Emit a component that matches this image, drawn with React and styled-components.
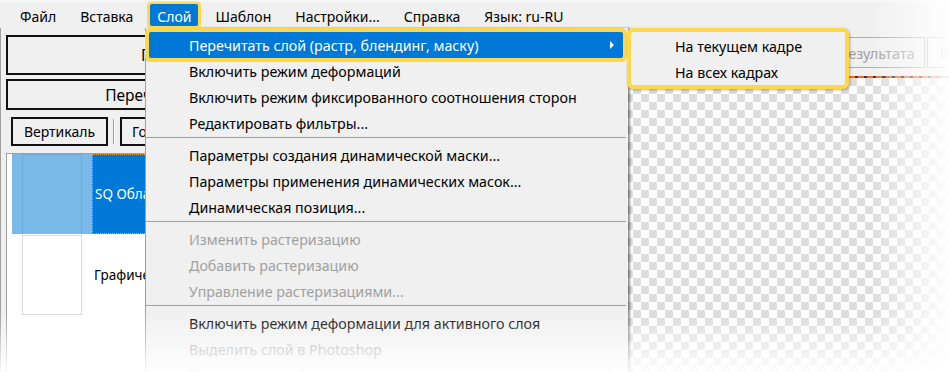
import React from "react";
import styled, { createGlobalStyle } from "styled-components";

const GlobalStyle = createGlobalStyle`
  html, body {
    margin: 0;
    padding: 0;
    background: #fff;
  }
  body {
    font-family: "Noto Sans", "DejaVu Sans", sans-serif;
    overflow: hidden;
  }
`;

const Screen = styled.div`
  position: relative;
  width: 949px;
  height: 372px;
  overflow: hidden;
  background: #f0f0f0;
  color: #000;
  font-size: 14.25px;
`;

const MenuBar = styled.div`
  display: flex;
  align-items: flex-start;
  height: 28px;
  padding-left: 13px;
  gap: 10px;
  font-size: 14px;
`;

const MenuTitle = styled.div`
  display: flex;
  align-items: center;
  box-sizing: border-box;
  height: 22px;
  margin-top: 4px;
  padding: 2px 7px 0;
  border-radius: 2px;
  white-space: nowrap;
  background: ${(p) => (p.$active ? "#0078d7" : "transparent")};
  color: ${(p) => (p.$active ? "#fff" : "#000")};
  box-shadow: ${(p) => (p.$active ? "0 0 0 3px #ffd84a" : "none")};
  position: relative;
  z-index: 3;
`;

const Workspace = styled.div`
  display: flex;
  height: 344px;
`;

const LeftPanel = styled.div`
  flex: none;
  width: 419px;
  display: flex;
  flex-direction: column;
  border-left: 1px solid #a0a0a0;
  padding: 7px 0 0 5px;
  gap: 4px;
`;

const WideButton = styled.div`
  box-sizing: border-box;
  height: ${(p) => p.$h}px;
  margin-right: 10px;
  display: flex;
  align-items: center;
  justify-content: center;
  border: 2px solid #111;
  background: #f0f0f0;
  font-size: 15.5px;
  white-space: nowrap;
`;

const ButtonRow = styled.div`
  display: flex;
  align-items: stretch;
  gap: 5px;
  height: 29px;
  padding-left: 5px;
  margin-top: 3px;
`;

const SmallButton = styled.div`
  box-sizing: border-box;
  width: ${(p) => p.$w}px;
  display: flex;
  align-items: center;
  justify-content: center;
  border: 2px solid #111;
  background: #f0f0f0;
  font-size: 14px;
  white-space: nowrap;
`;

const VSep = styled.div`
  width: 1px;
  background: #a0a0a0;
  border-right: 1px solid #fff;
  margin: 2px 0;
`;

const LayerList = styled.div`
  flex: 1;
  margin-top: 3px;
  margin-right: 10px;
  border-left: 1px solid #a0a0a0;
  border-top: 1px solid #a0a0a0;
  background: #fff;
  padding-left: 5px;
`;

const LayerRow = styled.div`
  display: grid;
  grid-template-columns: 80px 1fr;
  height: 80px;
  margin-bottom: 1px;
`;

const ThumbCell = styled.div`
  display: flex;
  justify-content: center;
  background: ${(p) => (p.$selected ? "#7ab8e8" : "#fff")};
`;

const Thumb = styled.div`
  width: 60px;
  box-sizing: border-box;
  border: 1px solid ${(p) => (p.$selected ? "#6aaade" : "#d9d9d9")};
  border-bottom: ${(p) => (p.$selected ? "none" : "1px solid #d9d9d9")};
`;

const NameCell = styled.div`
  display: flex;
  align-items: center;
  padding-left: 2px;
  font-size: 13.5px;
  white-space: nowrap;
  box-sizing: border-box;
  background: ${(p) => (p.$selected ? "#0078d7" : "#fff")};
  color: ${(p) => (p.$selected ? "#fff" : "#000")};
  border: ${(p) => (p.$selected ? "1px dotted #e8a050" : "none")};
`;

const RightPanel = styled.div`
  flex: 1;
  min-width: 0;
  display: flex;
  flex-direction: column;
`;

const Toolbar = styled.div`
  display: flex;
  gap: 2px;
  height: 31px;
  padding: 9px 0 0 178px;
`;

const ToolButton = styled.div`
  box-sizing: border-box;
  flex: none;
  width: ${(p) => p.$w}px;
  display: flex;
  align-items: center;
  justify-content: center;
  border: 1px solid #adadad;
  background: #f0f0f0;
  color: #a0a0a0;
  font-size: 14.5px;
  white-space: nowrap;
`;

const Canvas = styled.div`
  flex: 1;
  margin-top: 8px;
  border-top: 2px solid transparent;
  border-image: repeating-linear-gradient(90deg, #f26b2a 0 6px, #333 6px 9px) 2;
  background-color: #fff;
  background-image: repeating-conic-gradient(#dcdcdc 0 25%, #fff 0 50%);
  background-size: 16px 16px;
`;

const Dropdown = styled.div`
  position: absolute;
  z-index: 2;
  left: 145px;
  top: 28px;
  width: 483px;
  height: 360px;
  box-sizing: border-box;
  padding-top: 4px;
  background: #f0f0f0;
  border-left: 1px solid #a0a0a0;
  box-shadow: 2px 0 2px rgba(0, 0, 0, 0.45);
`;

const MenuItem = styled.div`
  position: relative;
  height: 26px;
  margin: 0 5px 0 3px;
  padding-left: 40px;
  display: flex;
  align-items: center;
  white-space: nowrap;
  border-radius: ${(p) => (p.$active ? "2px" : "0")};
  background: ${(p) => (p.$active ? "#0078d7" : "transparent")};
  color: ${(p) => (p.$active ? "#fff" : p.$disabled ? "#a0a0a0" : "#000")};
  box-shadow: ${(p) => (p.$active ? "0 0 0 4px #ffd84a" : "none")};
`;

const Arrow = styled.span`
  position: absolute;
  right: 9px;
  top: 50%;
  margin-top: -4px;
  width: 0;
  height: 0;
  border-top: 4px solid transparent;
  border-bottom: 4px solid transparent;
  border-left: 4px solid ${(p) => (p.$disabled ? "#a0a0a0" : "#fff")};
`;

const Separator = styled.div`
  height: 1px;
  margin: 1px 2px 4px 0;
  background: #a0a0a0;
`;

const Submenu = styled.div`
  position: absolute;
  z-index: 4;
  left: 627px;
  top: 28px;
  width: 222px;
  height: 61px;
  box-sizing: border-box;
  padding-top: 1px;
  border: 4px solid #ffd84a;
  border-radius: 6px;
  background: #f0f0f0;
  box-shadow: 1px 1px 3px rgba(0, 0, 0, 0.3);
`;

const SubItem = styled.div`
  height: 26px;
  padding-left: 44px;
  display: flex;
  align-items: center;
  white-space: nowrap;
`;

const Fade = styled.div`
  position: absolute;
  inset: 0;
  z-index: 10;
  pointer-events: none;
  background:
    linear-gradient(to right, rgba(255, 255, 255, 0) 870px, rgba(255, 255, 255, 0.95) 949px),
    linear-gradient(to bottom, rgba(255, 255, 255, 0) 312px, rgba(255, 255, 255, 0.92) 372px),
    linear-gradient(to bottom, rgba(248, 252, 252, 0.8) 0, rgba(255, 255, 255, 0) 3px);
`;

const titles = ["Файл", "Вставка", "Слой", "Шаблон", "Настройки...", "Справка", "Язык: ru-RU"];

const menu = [
  [
    { label: "Перечитать слой (растр, блендинг, маску)", active: true, sub: true },
    { label: "Включить режим деформаций" },
    { label: "Включить режим фиксированного соотношения сторон" },
    { label: "Редактировать фильтры..." },
  ],
  [
    { label: "Параметры создания динамической маски..." },
    { label: "Параметры применения динамических масок..." },
    { label: "Динамическая позиция..." },
  ],
  [
    { label: "Изменить растеризацию", disabled: true },
    { label: "Добавить растеризацию", disabled: true },
    { label: "Управление растеризациями...", disabled: true },
  ],
  [
    { label: "Включить режим деформации для активного слоя" },
    { label: "Выделить слой в Photoshop", disabled: true },
    { label: "Изменить тип области отношения на", disabled: true, sub: true },
  ],
];

export default function App() {
  return (
    <Screen>
      <GlobalStyle />
      <MenuBar>
        {titles.map((t) => (
          <MenuTitle key={t} $active={t === "Слой"}>
            {t}
          </MenuTitle>
        ))}
      </MenuBar>

      <Workspace>
        <LeftPanel>
          <WideButton $h={40}>Просчитать кадры</WideButton>
          <WideButton $h={31}>Перечитать все слои из PSD</WideButton>
          <ButtonRow>
            <SmallButton $w={97}>Вертикаль</SmallButton>
            <VSep />
            <SmallButton $w={110}>Горизонталь</SmallButton>
          </ButtonRow>
          <LayerList>
            <LayerRow>
              <ThumbCell $selected>
                <Thumb $selected />
              </ThumbCell>
              <NameCell $selected>SQ Облако</NameCell>
            </LayerRow>
            <LayerRow>
              <ThumbCell>
                <Thumb />
              </ThumbCell>
              <NameCell>Графический слой</NameCell>
            </LayerRow>
          </LayerList>
        </LeftPanel>

        <RightPanel>
          <Toolbar>
            <ToolButton $w={150}>Обновить</ToolButton>
            <ToolButton $w={170}>Просмотр результата</ToolButton>
            <ToolButton $w={130}>Предпросмотр</ToolButton>
          </Toolbar>
          <Canvas />
        </RightPanel>
      </Workspace>

      <Dropdown>
        {menu.map((group, gi) => (
          <React.Fragment key={gi}>
            {gi > 0 && <Separator />}
            {group.map((item) => (
              <MenuItem key={item.label} $active={item.active} $disabled={item.disabled}>
                {item.label}
                {item.sub && <Arrow $disabled={item.disabled} />}
              </MenuItem>
            ))}
          </React.Fragment>
        ))}
      </Dropdown>

      <Submenu>
        <SubItem>На текущем кадре</SubItem>
        <SubItem>На всех кадрах</SubItem>
      </Submenu>

      <Fade />
    </Screen>
  );
}
